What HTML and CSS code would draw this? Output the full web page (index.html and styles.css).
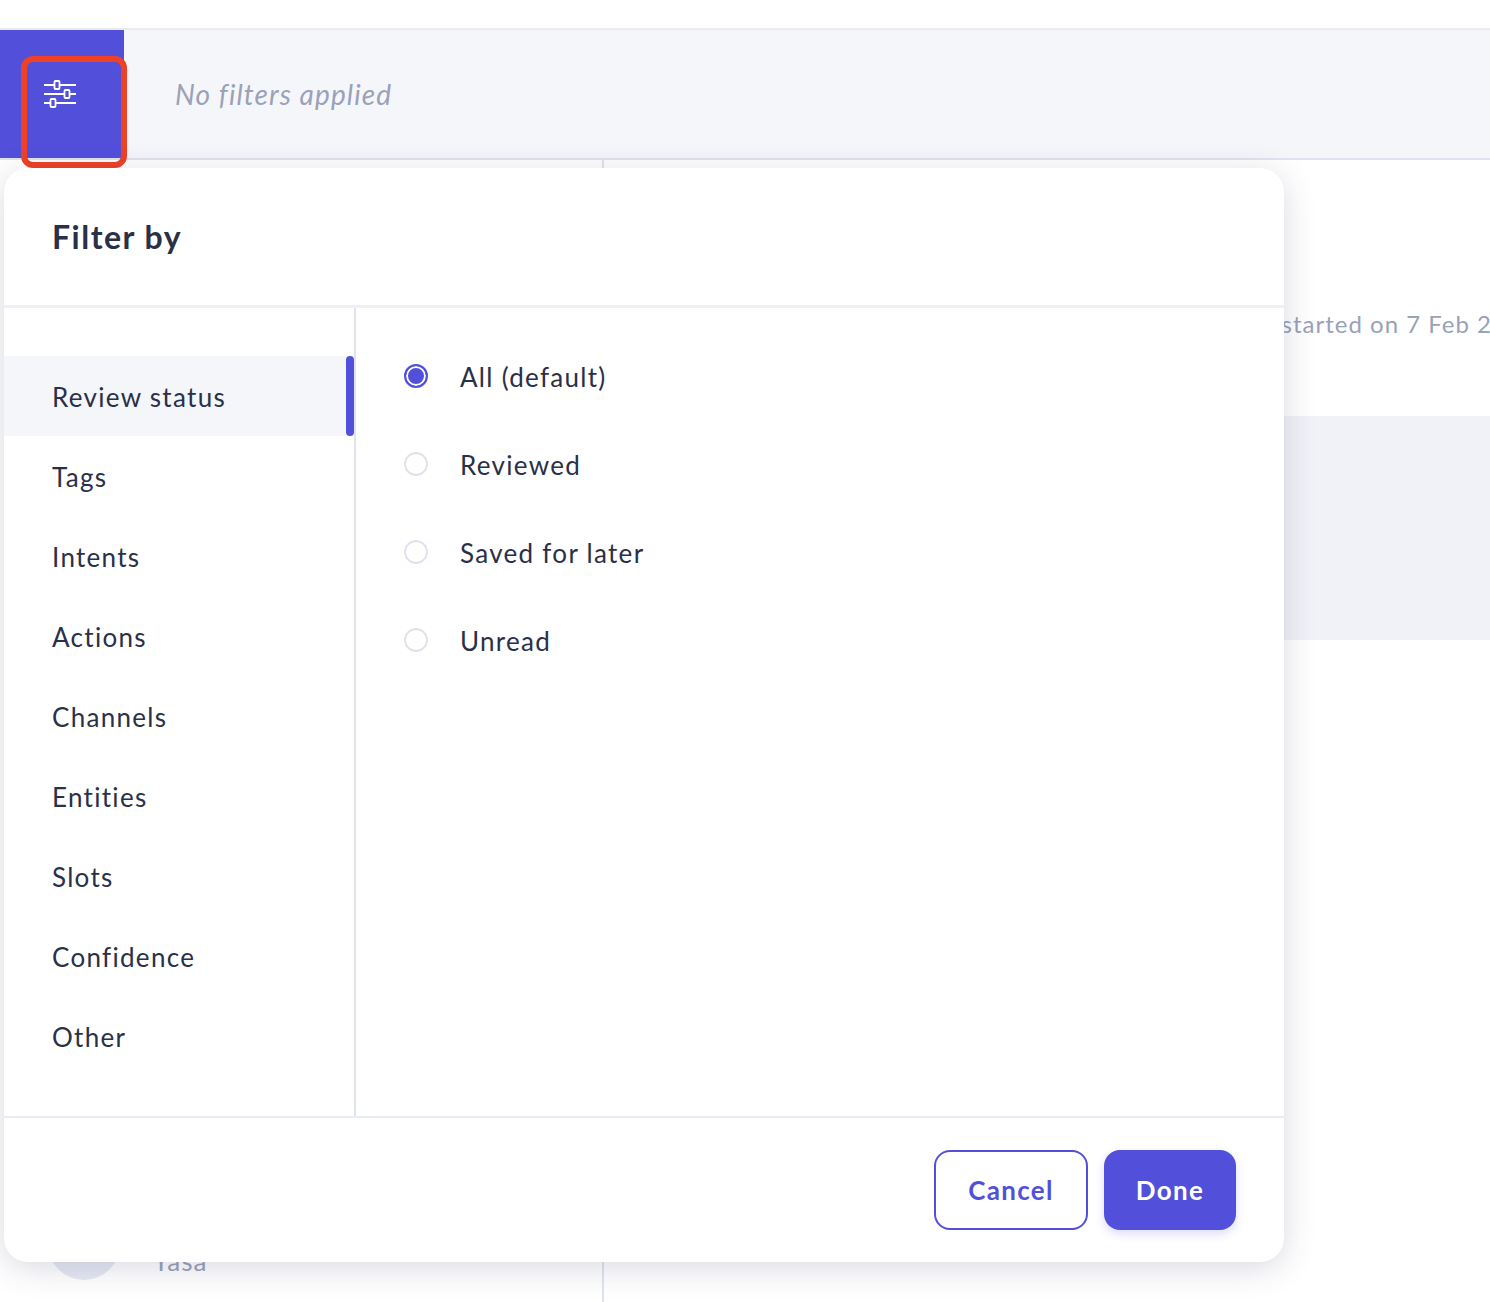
FILE: index.html

```html
<!DOCTYPE html>
<html lang="en">
<head>
  <meta charset="UTF-8" />
  <title>Conversations</title>
  <link rel="stylesheet" href="styles.css">
</head>
<body>
  <div class="filter-bar">
    <button class="filter-toggle">
      <svg width="32" height="28" viewBox="0 0 32 28" fill="none" stroke="#fff" stroke-width="1.8">
        <path d="M0 5h10.5M15.5 5h16.5M0 14h20.5M25.5 14h6.5M0 23h6.5M11.5 23h20.5" />
        <rect x="10.5" y="1" width="5" height="8" rx="1" />
        <rect x="20.5" y="10" width="5" height="8" rx="1" />
        <rect x="6.5" y="19" width="5" height="8" rx="1" />
      </svg>
    </button>
    <span class="filter-empty">No filters applied</span>
  </div>

  <div class="page">
    <div class="list">
      <div class="list-row">
        <div class="avatar"></div>
        <span class="list-name">Yasa</span>
      </div>
    </div>
    <div class="detail">
      <p class="detail-meta">Conversation started on 7 Feb 2021</p>
      <div class="detail-block"></div>
    </div>
  </div>

  <div class="highlight"></div>

  <div class="modal">
    <h2 class="modal-title">Filter by</h2>
    <div class="modal-body">
      <ul class="categories">
        <li class="active">Review status</li>
        <li>Tags</li>
        <li>Intents</li>
        <li>Actions</li>
        <li>Channels</li>
        <li>Entities</li>
        <li>Slots</li>
        <li>Confidence</li>
        <li>Other</li>
      </ul>
      <div class="options">
        <label class="option"><span class="radio checked"></span>All (default)</label>
        <label class="option"><span class="radio"></span>Reviewed</label>
        <label class="option"><span class="radio"></span>Saved for later</label>
        <label class="option"><span class="radio"></span>Unread</label>
      </div>
    </div>
    <div class="modal-footer">
      <button class="btn btn-outline">Cancel</button>
      <button class="btn btn-primary">Done</button>
    </div>
  </div>
</body>
</html>
```

FILE: styles.css

```css
* { margin: 0; padding: 0; box-sizing: border-box; }
html, body {
  height: 100%;
  overflow: hidden;
}
body {
  position: relative;
  padding-top: 28px;
  font-family: 'Lato', sans-serif;
  color: #2a3048;
  background: #fff;
}

.filter-bar {
  display: flex;
  align-items: center;
  height: 132px;
  background: #f5f6fa;
  border-top: 2px solid #e9ebf3;
  border-bottom: 2px solid #e0e3ef;
}
.filter-toggle {
  align-self: stretch;
  display: flex;
  justify-content: center;
  align-items: flex-start;
  width: 124px;
  padding: 50px 4px 0 0;
  background: #5250db;
  border: none;
}
.filter-empty {
  margin-left: 51px;
  font-size: 28px;
  font-style: italic;
  letter-spacing: 1.1px;
  color: #9aa1b8;
}

.page {
  display: flex;
  height: 1142px;
}
.list {
  width: 604px;
  padding: 1048px 0 0 48px;
  border-right: 2px solid #e0e3ef;
}
.list-row {
  display: flex;
  align-items: flex-end;
  gap: 33px;
}
.avatar {
  width: 72px;
  height: 72px;
  border-radius: 50%;
  background: #e6e8f3;
}
.list-name {
  margin-bottom: 3px;
  font-size: 26px;
  letter-spacing: 1px;
  color: #9aa1b8;
}
.detail {
  flex: 1;
  min-width: 0;
  padding-top: 147px;
}
.detail-meta {
  padding-left: 519px;
  font-size: 24px;
  line-height: 33px;
  letter-spacing: 1px;
  white-space: nowrap;
  color: #9aa1b8;
}
.detail-block {
  height: 224px;
  margin-top: 76px;
  background: #f1f2f7;
}

.highlight {
  position: absolute;
  top: 56px;
  left: 21px;
  width: 106px;
  height: 112px;
  border: 6px solid #ee4127;
  border-radius: 12px;
}

.modal {
  position: absolute;
  top: 168px;
  left: 4px;
  display: flex;
  flex-direction: column;
  width: 1280px;
  height: 1094px;
  background: #fff;
  border-radius: 24px;
  box-shadow: 0 6px 32px rgba(42, 48, 90, 0.18);
}
.modal-title {
  height: 140px;
  padding: 48px 48px 0;
  font-size: 32px;
  line-height: 42px;
  font-weight: 700;
  letter-spacing: 1.5px;
  border-bottom: 3px solid #eef0f6;
}
.modal-body {
  display: flex;
  height: 810px;
  border-bottom: 2px solid #e9ecf2;
}
.categories {
  width: 352px;
  padding-top: 48px;
  list-style: none;
  border-right: 2px solid #e0e3ef;
}
.categories li {
  position: relative;
  height: 80px;
  padding-left: 48px;
  font-size: 26px;
  line-height: 82px;
  letter-spacing: 1.3px;
}
.categories li.active {
  background: #f5f6fa;
}
.categories li.active::after {
  content: '';
  position: absolute;
  top: 0;
  right: 0;
  width: 8px;
  height: 80px;
  background: #5250db;
  border-radius: 4px;
}
.options {
  display: flex;
  flex-direction: column;
  gap: 40px;
  padding: 44px 0 0 48px;
}
.option {
  display: flex;
  align-items: center;
  gap: 32px;
  height: 48px;
  padding-top: 2px;
  font-size: 26px;
  letter-spacing: 1.3px;
}
.radio {
  width: 24px;
  height: 24px;
  margin-top: -2px;
  border: 2px solid #e0e3ef;
  border-radius: 50%;
}
.radio.checked {
  border-color: #5250db;
  background: #5250db;
  box-shadow: inset 0 0 0 2px #fff;
}
.modal-footer {
  flex: 1;
  display: flex;
  justify-content: flex-end;
  align-items: flex-start;
  gap: 16px;
  padding: 32px 48px 0 0;
}
.btn {
  height: 80px;
  font-family: 'Lato', sans-serif;
  font-size: 26px;
  font-weight: 700;
  letter-spacing: 1.3px;
  border-radius: 16px;
}
.btn-outline {
  width: 154px;
  color: #5250db;
  background: #fff;
  border: 2px solid #5250db;
}
.btn-primary {
  width: 132px;
  color: #fff;
  background: #5250db;
  border: none;
  box-shadow: 0 4px 10px rgba(82, 80, 219, 0.2);
}
```
